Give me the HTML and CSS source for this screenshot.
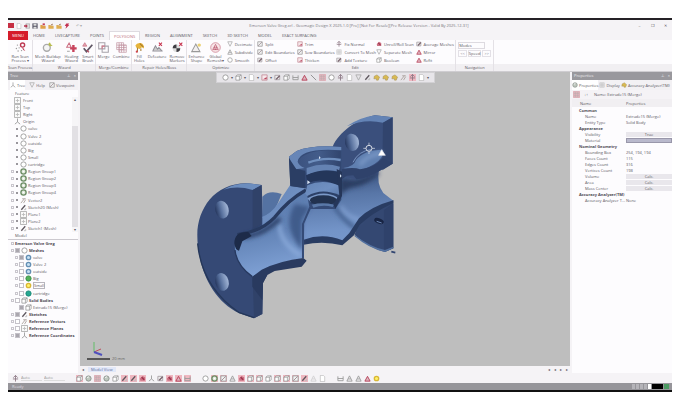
FILE: index.html
```html
<!DOCTYPE html>
<html lang="en">

<head>
    <meta charset="UTF-8">
    <meta name="viewport" content="width=device-width, initial-scale=1.0">
    <title>Geomagic Design X</title>
    <link rel="stylesheet" href="styles.css">
</head>

<body>
    <!-- shared icons -->
    <svg class="defs" aria-hidden="true">
        <symbol id="page" viewBox="0 0 16 16"><path d="M3 1h7l3 3v11H3z" fill="#fff" stroke="#999" /></symbol>
        <symbol id="save" viewBox="0 0 16 16"><path d="M1 1h14v14H1z" fill="#555364" /><path d="M4 2h8v5H4zM4 10h8v5H4z" fill="#ddd" /></symbol>
        <symbol id="folder" viewBox="0 0 16 16"><path d="M1 5h5l2 2h7v8H1z" fill="#dfad51" /><path d="M7 6l5-5v5z" fill="#8a5530" /></symbol>
        <symbol id="folderred" viewBox="0 0 16 16"><path d="M1 5h5l2 2h7v8H1z" fill="#dfa149" /><path d="M7 1h6v5H7z" fill="#c33d58" /></symbol>
        <symbol id="import" viewBox="0 0 16 16"><path d="M5 2h10v12H5z" fill="#ddd" stroke="#777" /><path d="M0 6h5V3l5 5-5 5v-3H0z" fill="#b5304c" /></symbol>
        <symbol id="flash" viewBox="0 0 16 16"><path d="M6 1h8l-3 4h3L4 15l2-7H2z" fill="#c33150" /></symbol>
        <symbol id="scan" viewBox="0 0 32 32"><circle cx="22" cy="9" r="6" fill="none" stroke="#bd3952" stroke-width="4" /><path d="M20 15l4 3 6 8-6-3z" fill="#bd3952" /><g fill="#999"><circle cx="7" cy="9" r="2" /><circle cx="4" cy="19" r="2" /><circle cx="12" cy="17" r="2" /><circle cx="9" cy="26" r="2" /><circle cx="19" cy="25" r="2" /></g></symbol>
        <symbol id="mesh" viewBox="0 0 32 32"><circle cx="14" cy="17" r="10" fill="#f5f5f5" stroke="#aaa" stroke-width="4" /><path d="M18 6l5-5 3 6 5 3-8 3z" fill="#b8bd4c" /></symbol>
        <symbol id="heal" viewBox="0 0 32 32"><path d="M2 15L9 3l6 12z" fill="#fff" stroke="#cc6e82" stroke-width="3" /><path d="M18 9h7v6h6v7h-6v7h-7v-7h-6v-7h6z" fill="#c8435c" /><path d="M3 27h8" stroke="#aaa" stroke-width="3" /></symbol>
        <symbol id="brush" viewBox="0 0 32 32"><path d="M2 12L8 2l6 10z" fill="#e6a5b1" stroke="#c4677a" stroke-width="2" /><path d="M5 18l8 10L30 8" fill="none" stroke="#5f5664" stroke-width="5" /><path d="M14 24l6 6" stroke="#b34b61" stroke-width="4" /></symbol>
        <symbol id="merge" viewBox="0 0 32 32"><path d="M2 2h18v18H2zM12 12h18v18H12z" fill="none" stroke="#a7a3ab" stroke-width="3" /><path d="M12 20v-8h8" fill="none" stroke="#d37a8b" stroke-width="3" /></symbol>
        <symbol id="combine" viewBox="0 0 32 32"><path d="M2 2h20v20H2zM9 2v28M16 2v28M2 9h28M2 16h28M9 9h21v21H9zM23 9v21M9 23h21" fill="none" stroke="#c295a2" stroke-width="2" /></symbol>
        <symbol id="fill" viewBox="0 0 32 32"><path d="M4 10Q8 1 20 3q10 3 9 16l-6-4-7 5-9-3z" fill="#e6b43c" /><path d="M17 5l10 9M10 17v13M20 19v7" stroke="#a57a2d" stroke-width="3" /><circle cx="8" cy="28" r="3" fill="#d24055" /></symbol>
        <symbol id="defeature" viewBox="0 0 32 32"><path d="M1 26h30M3 25l7-14 6 10 4-5 8 9" fill="#ccc" stroke="#929097" stroke-width="3" /><path d="M20 2l9 9m0-9l-9 9" stroke="#c5304b" stroke-width="3" /></symbol>
        <symbol id="marker" viewBox="0 0 32 32"><circle cx="13" cy="18" r="11" fill="#ddd" /><path d="M13 18V7A11 11 0 0 0 2 18zM13 18v11a11 11 0 0 0 11-11z" fill="#3e3c42" /><path d="M21 2l9 9m0-9l-9 9" stroke="#c5304b" stroke-width="3" /></symbol>
        <symbol id="enhance" viewBox="0 0 32 32"><path d="M2 28L14 6l12 22z" fill="#f3f0f0" stroke="#999" stroke-width="3" /><circle cx="24" cy="9" r="5" fill="#ecd276" /></symbol>
        <symbol id="remesh" viewBox="0 0 32 32"><circle cx="16" cy="16" r="14" fill="#f8e6e9" stroke="#c97889" stroke-width="2" /><path d="M8 22L16 7l8 15zM12 15h8l-4 7z" fill="none" stroke="#b64d64" stroke-width="2" /></symbol>
        <symbol id="tri" viewBox="0 0 16 16"><path d="M2 14L8 2l6 12zM5 9h6" fill="none" stroke="#999" stroke-width="2" /></symbol>
        <symbol id="tridown" viewBox="0 0 16 16"><path d="M2 2h12L8 14z" fill="none" stroke="#aaa" stroke-width="2" /></symbol>
        <symbol id="redtri" viewBox="0 0 16 16"><path d="M2 14L8 3l6 11z" fill="#ddb4be" stroke="#b53b54" stroke-width="2" /></symbol>
        <symbol id="split" viewBox="0 0 16 16"><path d="M2 2h12v12H2z" fill="#f2f2f2" stroke="#999" stroke-width="2" /><path d="M3 13L13 3" stroke="#998890" stroke-width="2" /></symbol>
        <symbol id="trim" viewBox="0 0 16 16"><path d="M2 2h12v12H2z" fill="#f7e8eb" stroke="#c6909c" stroke-width="2" /><path d="M5 12h8V7z" fill="#ba4860" /></symbol>
        <symbol id="grid" viewBox="0 0 16 16"><path d="M2 2h12v12H2zM2 6h12M2 10h12M6 2v12M10 2v12" fill="none" stroke="#aaa" stroke-width="1" /></symbol>
        <symbol id="tool" viewBox="0 0 16 16"><path d="M2 3h11v10H2z" fill="#eee" stroke="#a79fa5" stroke-width="2" /><path d="M5 12L13 4" stroke="#77606a" stroke-width="3" /></symbol>
        <symbol id="redtool" viewBox="0 0 16 16"><path d="M2 8l6-6 6 3v8H3z" fill="#cb7284" /><path d="M6 5l6 6" stroke="#9d2f49" stroke-width="3" /></symbol>
        <symbol id="normal" viewBox="0 0 16 16"><path d="M8 1v14M3 6l5-5 5 5M2 9h12" fill="none" stroke="#8c7783" stroke-width="2" /></symbol>
        <symbol id="plane" viewBox="0 0 16 16"><path d="M1 1h14v14H1z" fill="#fafafa" stroke="#aaa" stroke-width="2" /><path d="M8 4v8M4 8h8" stroke="#bbb" stroke-width="2" /></symbol>
        <symbol id="origin" viewBox="0 0 16 16"><path d="M8 1v8l-6 5m6-5l6 5" fill="none" stroke="#999" stroke-width="2" /></symbol>
        <symbol id="ring" viewBox="0 0 16 16"><circle cx="8" cy="8" r="6" fill="#fff" stroke="#999" stroke-width="2" /></symbol>
        <symbol id="region" viewBox="0 0 16 16"><circle cx="8" cy="8" r="6" fill="#d8e3d3" stroke="#6d8d65" stroke-width="3" /><path d="M6 6h4v4H6z" fill="#fff" /></symbol>
        <symbol id="vector" viewBox="0 0 16 16"><path d="M2 14L10 4M5 4h8M8 14l5-8" stroke="#aaa09a" stroke-width="2" /></symbol>
        <symbol id="pencil" viewBox="0 0 16 16"><path d="M3 13L12 3" stroke="#5d565d" stroke-width="3" /><path d="M9 13h4V9" fill="none" stroke="#bbb" stroke-width="2" /></symbol>
        <symbol id="cube" viewBox="0 0 16 16"><path d="M2 5l4-3h8v9l-4 3H2zM2 5h8v9M10 5l4-3" fill="#fff" stroke="#888" stroke-width="1.5" /></symbol>
        <symbol id="blue" viewBox="0 0 16 16"><circle cx="8" cy="8" r="5" fill="#c7e0f2" stroke="#638fb4" stroke-width="3" /></symbol>
        <symbol id="green" viewBox="0 0 16 16"><circle cx="8" cy="8" r="6" fill="#55b35d" stroke="#338a45" stroke-width="2" /></symbol>
        <symbol id="yellow" viewBox="0 0 16 16"><circle cx="8" cy="8" r="5" fill="#fff16a" stroke="#d9b735" stroke-width="3" /></symbol>
        <symbol id="teal" viewBox="0 0 16 16"><circle cx="8" cy="8" r="6" fill="#28a791" stroke="#178775" stroke-width="2" /></symbol>
        <symbol id="ball" viewBox="0 0 16 16"><circle cx="8" cy="8" r="6" fill="#bfc8bf" stroke="#89918a" stroke-width="2" /><path d="M5 6l4-2" stroke="#fff" stroke-width="2" /></symbol>
        <symbol id="gold" viewBox="0 0 16 16"><path d="M3 5l6-3 6 5-3 7H8v-3H2z" fill="#d9ba52" stroke="#9b8550" /></symbol>
        <symbol id="line" viewBox="0 0 16 16"><path d="M2 2l12 12" stroke="#888" stroke-width="2" /></symbol>
        <symbol id="measure" viewBox="0 0 16 16"><path d="M2 3v10h12V3M2 8h12" fill="none" stroke="#999" stroke-width="2" /></symbol>
    </svg>

    <div class="app">
        <header class="titlebar">
            <div class="quick">
                <span class="logo"></span>
                <svg><use href="#page" /></svg>
                <svg><use href="#import" /></svg>
                <svg><use href="#save" /></svg>
                <svg><use href="#folderred" /></svg>
                <svg><use href="#folder" /></svg>
                <svg><use href="#folder" /></svg>
                <svg><use href="#flash" /></svg>
                <span class="faint">↶ ▾</span>
            </div>
            <h1>Emerson Valve Greg.xrl - Geomagic Design X 2025.1.0 [Pro] [Not For Resale][Pre Release Version - Valid By 2025-12-31]</h1>
            <div class="window-buttons">
                <button aria-label="Minimize">–</button>
                <button aria-label="Restore">❐</button>
                <button aria-label="Close">✕</button>
            </div>
        </header>

        <nav class="tabs">
            <button class="menu">MENU</button>
            <button>HOME</button>
            <button>LIVECAPTURE</button>
            <button>POINTS</button>
            <button class="active">POLYGONS</button>
            <button>REGION</button>
            <button>ALIGNMENT</button>
            <button>SKETCH</button>
            <button>3D SKETCH</button>
            <button>MODEL</button>
            <button>EXACT SURFACING</button>
        </nav>

        <div class="ribbon">
            <section class="group scan">
                <div class="tools">
                    <button class="big"><svg><use href="#scan" /></svg><span>Run Scan<br>Process ▾</span></button>
                </div>
                <h2>Scan Process</h2>
            </section>
            <section class="group wizard">
                <div class="tools">
                    <button class="big"><svg><use href="#mesh" /></svg><span>Mesh Buildup<br>Wizard</span></button>
                    <button class="big"><svg><use href="#heal" /></svg><span>Healing<br>Wizard</span></button>
                    <button class="big"><svg><use href="#brush" /></svg><span>Smart<br>Brush</span></button>
                </div>
                <h2>Wizard</h2>
            </section>
            <section class="group combine">
                <div class="tools">
                    <button class="big"><svg><use href="#merge" /></svg><span>Merge</span></button>
                    <button class="big"><svg><use href="#combine" /></svg><span>Combine</span></button>
                </div>
                <h2>Merge/Combine</h2>
            </section>
            <section class="group repair">
                <div class="tools">
                    <button class="big"><svg><use href="#fill" /></svg><span>Fill<br>Holes</span></button>
                    <button class="big"><svg><use href="#defeature" /></svg><span>Defeature</span></button>
                    <button class="big"><svg><use href="#marker" /></svg><span>Remove<br>Markers</span></button>
                </div>
                <h2>Repair Holes/Boss</h2>
            </section>
            <section class="group optimize">
                <div class="tools">
                    <button class="big"><svg><use href="#enhance" /></svg><span>Enhance<br>Shape</span></button>
                    <button class="big"><svg><use href="#remesh" /></svg><span>Global<br>Remesh▾</span></button>
                    <div class="stack">
                        <button><svg><use href="#tridown" /></svg>Decimate</button>
                        <button><svg><use href="#tri" /></svg>Subdivide</button>
                        <button><svg><use href="#ring" /></svg>Smooth</button>
                    </div>
                </div>
                <h2>Optimize</h2>
            </section>
            <section class="group edit">
                <div class="tools">
                    <div class="stack">
                        <button><svg><use href="#split" /></svg>Split</button>
                        <button><svg><use href="#split" /></svg>Edit Boundaries</button>
                        <button><svg><use href="#tool" /></svg>Offset</button>
                    </div>
                    <div class="stack">
                        <button><svg><use href="#trim" /></svg>Trim</button>
                        <button><svg><use href="#split" /></svg>Sew Boundaries</button>
                        <button><svg><use href="#trim" /></svg>Thicken</button>
                    </div>
                    <div class="stack">
                        <button><svg><use href="#normal" /></svg>Fix Normal</button>
                        <button><svg><use href="#grid" /></svg>Convert To Mesh</button>
                        <button><svg><use href="#tool" /></svg>Add Texture</button>
                    </div>
                    <div class="stack">
                        <button><svg><use href="#redtool" /></svg>Unroll/Roll Scan</button>
                        <button><svg><use href="#tridown" /></svg>Separate Mesh</button>
                        <button><svg><use href="#cube" /></svg>Boolean</button>
                    </div>
                    <div class="stack">
                        <button><svg><use href="#tool" /></svg>Average Meshes</button>
                        <button><svg><use href="#redtri" /></svg>Mirror</button>
                        <button><svg><use href="#redtri" /></svg>Refit</button>
                    </div>
                </div>
                <h2>Edit</h2>
            </section>
            <section class="group navigation">
                <div class="tools nav-tools">
                    <select aria-label="Navigation mode"><option>Modes</option></select>
                    <div class="steps"><button>&lt;&lt;</button><button>Speed</button><button>&gt;&gt;</button></div>
                </div>
                <h2>Navigation</h2>
            </section>
            <div class="rest"></div>
        </div>

        <main class="workspace">
            <aside class="tree">
                <header class="panel-head"><span>Tree</span><span class="pins">⊥ ×</span></header>
                <div class="panel-tabs">
                    <button class="on"><svg><use href="#origin" /></svg>Tree</button>
                    <button><svg><use href="#tridown" /></svg>Help</button>
                    <button><svg><use href="#split" /></svg>Viewpoint</button>
                </div>
                <h3>Feature</h3>
                <div class="scroll">
                    <ul class="list features">
                        <li class="root"><svg><use href="#plane" /></svg>Front</li>
                        <li class="root"><svg><use href="#plane" /></svg>Top</li>
                        <li class="root"><svg><use href="#plane" /></svg>Right</li>
                        <li class="root"><svg><use href="#origin" /></svg>Origin</li>
                        <li><i></i><b></b><svg><use href="#ring" /></svg>valve</li>
                        <li><i></i><b></b><svg><use href="#ring" /></svg>Valve 2</li>
                        <li><i></i><b></b><svg><use href="#ring" /></svg>outside</li>
                        <li><i></i><b></b><svg><use href="#ring" /></svg>Big</li>
                        <li><i></i><b></b><svg><use href="#ring" /></svg>Small</li>
                        <li><i></i><b></b><svg><use href="#ring" /></svg>cartridge</li>
                        <li><i class="plus"></i><b></b><svg><use href="#region" /></svg>Region Group1</li>
                        <li><i class="plus"></i><b></b><svg><use href="#region" /></svg>Region Group2</li>
                        <li><i class="plus"></i><b></b><svg><use href="#region" /></svg>Region Group3</li>
                        <li><i class="plus"></i><b></b><svg><use href="#region" /></svg>Region Group4</li>
                        <li><i class="plus"></i><b></b><svg><use href="#vector" /></svg>Vector2</li>
                        <li><i class="plus"></i><b></b><svg><use href="#pencil" /></svg>Sketch20 (Mesh)</li>
                        <li><i class="plus"></i><b></b><svg><use href="#plane" /></svg>Plane1</li>
                        <li><i class="plus"></i><b></b><svg><use href="#plane" /></svg>Plane2</li>
                        <li><i class="plus"></i><b></b><svg><use href="#pencil" /></svg>Sketch1 (Mesh)</li>
                    </ul>
                    <div class="scrollbar"><span>▴</span><div class="thumb"></div><span>▾</span></div>
                </div>
                <h3 class="model-title">Model</h3>
                <ul class="list models">
                    <li class="strong"><i class="plus"></i>Emerson Valve Greg</li>
                    <li class="strong"><i class="plus"></i><input type="checkbox" aria-label="Meshes" checked><svg><use href="#ring" /></svg>Meshes</li>
                    <li class="child"><i class="plus"></i><input type="checkbox" aria-label="valve" checked><svg><use href="#blue" /></svg>valve</li>
                    <li class="child"><i class="plus"></i><input type="checkbox" aria-label="Valve 2"><svg><use href="#blue" /></svg>Valve 2</li>
                    <li class="child"><i class="plus"></i><input type="checkbox" aria-label="outside"><svg><use href="#blue" /></svg>outside</li>
                    <li class="child"><i class="plus"></i><input type="checkbox" aria-label="Big"><svg><use href="#green" /></svg>Big</li>
                    <li class="child"><i class="plus"></i><input type="checkbox" aria-label="Small"><svg><use href="#yellow" /></svg><span class="selected">Small</span></li>
                    <li class="child"><i class="plus"></i><input type="checkbox" aria-label="cartridge"><svg><use href="#teal" /></svg>cartridge</li>
                    <li class="strong"><i class="plus"></i><input type="checkbox" aria-label="Solid Bodies"><svg><use href="#cube" /></svg>Solid Bodies</li>
                    <li class="child"><i></i><input type="checkbox" aria-label="Extrude15" checked><svg><use href="#cube" /></svg>Extrude15 (Merge)</li>
                    <li class="strong"><i class="plus"></i><input type="checkbox" aria-label="Sketches" checked><svg><use href="#pencil" /></svg>Sketches</li>
                    <li class="strong"><i class="plus"></i><input type="checkbox" aria-label="Reference Vectors"><svg><use href="#vector" /></svg>Reference Vectors</li>
                    <li class="strong"><i class="plus"></i><input type="checkbox" aria-label="Reference Planes"><svg><use href="#plane" /></svg>Reference Planes</li>
                    <li class="strong"><i class="plus"></i><input type="checkbox" aria-label="Reference Coordinates" checked><svg><use href="#origin" /></svg>Reference Coordinates</li>
                </ul>
            </aside>

            <section class="center">
                <div class="viewport">
                    <div class="view-tools">
                        <svg><use href="#ring" /></svg><span>▾</span>
                        <svg><use href="#cube" /></svg><span>▾</span>
                        <svg><use href="#page" /></svg><span>▾</span>
                        <svg><use href="#trim" /></svg><span>▾</span>
                        <svg><use href="#tool" /></svg>
                        <svg><use href="#cube" /></svg>
                        <svg><use href="#measure" /></svg>
                        <svg><use href="#redtri" /></svg>
                        <svg><use href="#line" /></svg>
                        <svg class="hot"><use href="#grid" /></svg>
                        <svg><use href="#ring" /></svg>
                        <svg><use href="#normal" /></svg>
                        <svg><use href="#page" /></svg>
                        <svg><use href="#tridown" /></svg>
                        <svg><use href="#pencil" /></svg>
                        <svg><use href="#gold" /></svg>
                        <svg><use href="#gold" /></svg>
                        <svg><use href="#gold" /></svg>
                        <svg><use href="#vector" /></svg>
                        <svg class="hot"><use href="#normal" /></svg>
                        <svg><use href="#page" /></svg><span>▾</span>
                    </div>
                    <svg class="scene" viewBox="0 0 490 283" preserveAspectRatio="xMinYMin meet" role="img" aria-label="Valve body, section view">
                        <defs>
                            <linearGradient id="pipe" x1=".3" y1="0" x2=".5" y2="1"><stop offset="0" stop-color="#5b7bad" /><stop offset=".5" stop-color="#6384b7" /><stop offset="1" stop-color="#82a4d8" /></linearGradient>
                            <linearGradient id="pipe2" x1=".4" y1="0" x2=".5" y2="1"><stop offset="0" stop-color="#384e7a" /><stop offset=".35" stop-color="#5876a7" /><stop offset=".8" stop-color="#7394c8" /><stop offset="1" stop-color="#7697cb" /></linearGradient>
                            <linearGradient id="slope" x1="0" y1="0" x2="1" y2="1"><stop offset="0" stop-color="#6585b6" /><stop offset=".5" stop-color="#6f8fc1" /><stop offset="1" stop-color="#5573a3" /></linearGradient>
                            <linearGradient id="bowl" x1="0" y1="0" x2="1" y2="0"><stop offset="0" stop-color="#3b527f" /><stop offset=".5" stop-color="#435c8a" /><stop offset="1" stop-color="#31456e" /></linearGradient>
                            <linearGradient id="hole"><stop offset="0" stop-color="#26375e" /><stop offset=".4" stop-color="#566f9c" /><stop offset="1" stop-color="#a5b8d8" /></linearGradient>
                            <filter id="shade" x="-50%" y="-50%" width="200%" height="200%"><feGaussianBlur stdDeviation="7" /></filter>
                        </defs>
                        <g transform="translate(100 17) scale(.3333)">
                            <!-- lower rear flange -->
                            <path d="M640 301V445L615 456Q570 445 524 405L536 360Q580 322 640 301z" fill="#344872" />
                            <path d="M612 330l28-20v135l-28 11z" fill="#2f426b" />
                            <path d="M524 405Q570 441 615 450L640 440v5l-25 11Q567 446 524 409z" fill="#52709f" />
                            <!-- right passage -->
                            <path d="M380 245L524 225 597 208Q589 253 610 279L640 302Q570 328 540 368L487 434Q435 408 371 432L366 330z" fill="url(#pipe2)" />
                            <path d="M480 236L524 240Q560 232 596 212L596 224Q560 255 520 262 490 270 478 290z" fill="#2b3c62" filter="url(#shade)" />
                            <path d="M462 318Q490 360 525 385" fill="none" stroke="#415d8c" stroke-width="11" filter="url(#shade)" />
                            <path d="M482 318Q500 352 540 360" fill="none" stroke="#8caadb" stroke-width="7" filter="url(#shade)" />
                            <path d="M640 301Q572 320 537 355L508 399 487 421Q430 398 371 419V434Q430 422 487 436L522 406 538 376Q574 340 640 309z" fill="#293c62" />
                            <ellipse cx="597" cy="363" rx="15" ry="8" fill="#182544" transform="rotate(20 597 363)" />
                            <path d="M590 364l15 5" stroke="#6c88b7" stroke-width="3" />
                            <!-- rear flange -->
                            <path d="M458 140C478 95 530 58 585 46L638 52V191L598 213C570 230 545 238 523 236L470 225z" fill="#3a4f7c" />
                            <path d="M500 79Q540 52 585 46L638 52 609 68Q555 55 500 79z" fill="#6383b5" />
                            <path d="M609 68l29-16v139l-31 20z" fill="#31446d" />
                            <path d="M490 204Q522 200 528 180 550 150 609 149L606 170Q590 195 545 209 510 214 490 204z" fill="#5f7fb0" />
                            <path d="M540 195q20-30 66-36" fill="none" stroke="#85a2cf" stroke-width="8" filter="url(#shade)" />
                            <path d="M519 187Q535 153 575 148" fill="none" stroke="#7893bf" stroke-width="3" />
                            <path d="M485 208Q520 200 540 208 580 205 608 175L638 190 598 213Q565 235 529 238L520 226 500 227 486 238z" fill="#2f426b" />
                            <ellipse cx="516" cy="127" rx="21" ry="26" fill="url(#hole)" transform="rotate(-12 516 127)" />
                            <!-- front flange -->
                            <path d="M245 255L204 250C105 247 51 327 52 407 53 505 97 602 178 640L222 655 247 642 249 548 262 525 217 520 185 490 175 430 218 400 250 375z" fill="#354975" />
                            <path d="M130 269Q165 250 204 250L245 255 218 270Q172 256 130 269z" fill="#6c8dbe" />
                            <path d="M218 270l27-15V372L218 396zM218 530l31-17-2 129-25 13z" fill="#304269" />
                            <path d="M53 430Q65 560 176 637L222 653" fill="none" stroke="#253759" stroke-width="4" />
                            <!-- side boss and sloped wall -->
                            <path d="M247 290Q268 268 305 282L285 330 247 355z" fill="#5472a2" />
                            <path d="M247 350Q275 340 295 308L330 256 378 260V280L305 345 247 385z" fill="url(#slope)" />
                            <!-- front passage -->
                            <path d="M180 402Q240 395 285 352L376 272 398 308Q368 350 370 475 290 485 217 530 169 495 165 450 162 415 180 402z" fill="url(#pipe)" />
                            <path d="M345 312Q302 380 366 450V360L390 320z" fill="#405b8b" filter="url(#shade)" />
                            <path d="M298 372Q300 430 362 466" fill="none" stroke="#91b0e0" stroke-width="9" filter="url(#shade)" />
                            <path d="M190 410Q250 405 300 355" fill="none" stroke="#2b3e65" stroke-width="14" filter="url(#shade)" />
                            <path d="M172 404Q240 397 284 352 325 300 378 270" fill="none" stroke="#283a5f" stroke-width="10" />
                            <path d="M205 396Q163 394 163 430 166 452 177 452L187 424 215 408z" fill="#1d2b49" />
                            <path d="M165 450Q169 495 217 530" fill="none" stroke="#27395f" stroke-width="4" />
                            <path d="M217 530L245 509Q300 482 370 474L380 482 365 500 284 513 262 525 249 550 247 600 217 560z" fill="#293a5f" />
                            <!-- bonnet ring -->
                            <path d="M327 170L350 153Q399 134 484 141V300L466 327H392L372 372V475H366V372L388 320 378 265 331 258z" fill="#354b77" />
                            <path d="M350 200Q352 145 482 151V212Q430 190 378 218z" fill="url(#bowl)" />
                            <path d="M327 170L350 153Q399 134 484 141V151Q360 142 353 185 356 196 374 204L348 208Q330 190 327 170z" fill="#6786b7" />
                            <path d="M385 188Q430 170 482 180" fill="none" stroke="#6f8fbe" stroke-width="7" />
                            <path d="M380 204Q430 186 480 200L476 215Q430 205 380 226z" fill="#6482b2" />
                            <path d="M378 226Q425 203 480 217V262Q430 228 382 250z" fill="#24365a" />
                            <!-- valve seat -->
                            <path d="M382 256Q430 235 480 258L479 296 390 300 376 280z" fill="url(#slope)" />
                            <path d="M382 288Q425 262 478 285L470 307 392 312z" fill="#2c4067" />
                            <path d="M382 295Q430 268 472 292L465 307Q430 295 392 307z" fill="#7b99c8" />
                            <ellipse cx="430" cy="301" rx="40" ry="15" fill="#22324f" />
                            <path d="M396 314q32-8 66 0l-4 7q-29-8-58 2z" fill="#5a79a8" />
                            <path d="M327 174L349 208 376 212V265L331 258z" fill="#2b3e64" />
                            <path d="M470 207L486 215V288L466 327 460 312 478 285z" fill="#253659" />
                            <path d="M382 241l9 6-9 6zM417 168l5 5-5 5zM480 222l5 6-5 5z" fill="#d6e2f3" />
                            <!-- bolt holes -->
                            <ellipse cx="126" cy="329" rx="20" ry="27" fill="url(#hole)" transform="rotate(-15 126 329)" />
                            <ellipse cx="126" cy="546" rx="20" ry="27" fill="url(#hole)" transform="rotate(-15 126 546)" />
                            <!-- cursor -->
                            <circle cx="567" cy="145" r="9" fill="none" stroke="#d5dae3" stroke-width="3" />
                            <path d="M567 128v8m0 18v8m-17-17h8m18 0h9M596 166l9-17 11 17z" fill="#fff" stroke="#e6e9ef" stroke-width="2" />
                            <path d="M634 455l12 3" stroke="#314570" stroke-width="5" />
                        </g>
                        <!-- axes and scale -->
                        <g fill="none" stroke-width="1">
                            <path d="M14 269v-10" stroke="#62bd69" /><path d="M14 269l7-3" stroke="#bc4d5d" /><path d="M14 269l8 3" stroke="#4e50bd" stroke-width="2" />
                            <path d="M7 276h23" stroke="#555" stroke-width="2" />
                        </g>
                        <text x="32" y="277">20 mm</text>
                    </svg>
                </div>
                <div class="view-tabs"><span>◂</span><button>Model View</button><span class="arrows">◂ ◂ ▸ ▸</span></div>
            </section>

            <aside class="properties">
                <header class="panel-head"><span>Properties</span><span class="pins">⊥ ×</span></header>
                <div class="panel-tabs">
                    <button class="on"><svg><use href="#ball" /></svg>Properties</button>
                    <button><svg><use href="#grid" /></svg>Display</button>
                    <button><svg><use href="#gold" /></svg>Accuracy Analyzer(TM)</button>
                </div>
                <div class="name-row"><svg class="hot"><use href="#grid" /></svg><span class="sort">↓↑</span><span>Name: Extrude15 (Merge)</span></div>
                <table>
                    <thead><tr><th>Name</th><th>Properties</th></tr></thead>
                    <tbody>
                        <tr class="section"><th colspan="2">Common</th></tr>
                        <tr><td>Name</td><td>Extrude15 (Merge)</td></tr>
                        <tr><td>Entity Type</td><td>Solid Body</td></tr>
                        <tr class="section"><th colspan="2">Appearance</th></tr>
                        <tr><td>Visibility</td><td><button>True</button></td></tr>
                        <tr><td>Material</td><td><button class="material" aria-label="Material color"></button></td></tr>
                        <tr class="section"><th colspan="2">Nominal Geometry</th></tr>
                        <tr><td>Bounding Box</td><td>254, 194, 194</td></tr>
                        <tr><td>Faces Count</td><td>115</td></tr>
                        <tr><td>Edges Count</td><td>316</td></tr>
                        <tr><td>Vertices Count</td><td>198</td></tr>
                        <tr><td>Volume</td><td><button>Calc.</button></td></tr>
                        <tr><td>Area</td><td><button>Calc.</button></td></tr>
                        <tr><td>Mass Center</td><td><button>Calc.</button></td></tr>
                        <tr class="section"><th colspan="2">Accuracy Analyzer(TM)</th></tr>
                        <tr><td>Accuracy Analyzer T...</td><td>None</td></tr>
                    </tbody>
                </table>
            </aside>
        </main>

        <footer>
            <div class="bottom-tools">
                <div class="filters">
                    <svg><use href="#normal" /></svg>
                    <select aria-label="Filter"><option>Auto</option></select>
                    <select aria-label="Snap"><option>Auto</option></select>
                </div>
                <div class="icons">
                    <svg class="hot"><use href="#cube" /></svg>
                    <svg><use href="#ball" /></svg>
                    <svg class="hot"><use href="#grid" /></svg>
                    <svg><use href="#ball" /></svg>
                    <svg><use href="#cube" /></svg>
                    <svg class="hot"><use href="#pencil" /></svg>
                    <svg class="hot"><use href="#pencil" /></svg>
                    <svg class="hot"><use href="#redtool" /></svg>
                    <svg><use href="#origin" /></svg>
                    <svg><use href="#tool" /></svg>
                    <svg class="hot"><use href="#redtool" /></svg>
                    <svg class="hot"><use href="#redtri" /></svg>
                    <svg class="hot"><use href="#measure" /></svg>
                </div>
                <div class="icons">
                    <svg><use href="#ring" /></svg>
                    <svg class="hot"><use href="#region" /></svg>
                    <svg class="hot"><use href="#split" /></svg>
                    <svg><use href="#tri" /></svg>
                    <svg class="hot"><use href="#redtool" /></svg>
                    <svg class="hot"><use href="#cube" /></svg>
                    <svg class="hot"><use href="#cube" /></svg>
                    <svg><use href="#cube" /></svg>
                    <svg class="hot"><use href="#cube" /></svg>
                    <svg class="hot"><use href="#cube" /></svg>
                    <svg class="hot"><use href="#split" /></svg>
                    <svg class="hot"><use href="#pencil" /></svg>
                    <svg class="dim"><use href="#tri" /></svg>
                    <svg><use href="#page" /></svg>
                </div>
                <div class="icons">
                    <svg><use href="#measure" /></svg>
                    <svg><use href="#tri" /></svg>
                    <svg><use href="#tri" /></svg>
                    <svg><use href="#redtri" /></svg>
                    <svg><use href="#yellow" /></svg>
                </div>
            </div>
            <div class="status"><span>Ready</span><div class="meters"><i></i><i></i><i></i><i></i><i class="white"></i><i class="black"></i><i class="ok"></i></div></div>
        </footer>
    </div>
</body>

</html>
```
FILE: styles.css
```css
* {
    box-sizing: border-box;
}

body {
    display: flex;
    min-height: 100vh;
    margin: 0;
    padding: 18px 8px 19px;
    background: #fff;
    color: #5a575e;
    font: 4px/5px "Open Sans", "Noto Sans", sans-serif;
}

button,
select {
    margin: 0;
    padding: 0;
    border: 0;
    background: none;
    color: inherit;
    font: inherit;
    appearance: none;
}

h1,
h2,
h3,
ul {
    margin: 0;
    padding: 0;
    font-size: 4px;
    font-weight: normal;
    list-style: none;
}

svg {
    flex: none;
    width: 7px;
    height: 7px;
}

.defs {
    position: absolute;
    width: 0;
    height: 0;
}

.hot {
    background: #efb7c0;
}

.dim {
    opacity: .4;
}

.app {
    display: flex;
    flex: 1;
    flex-direction: column;
    min-width: 0;
    border-top: 2px solid #252126;
    border-bottom: 2px solid #111;
    background: #f5f3f6;
}

/* title and tabs */
.titlebar {
    display: grid;
    grid-template-columns: 1fr auto 1fr;
    align-items: center;
    height: 11px;
}

.titlebar h1 {
    color: #77747b;
    white-space: nowrap;
    padding-left: 38px;
}

.quick {
    display: flex;
    gap: 2px;
    align-items: center;
}

.quick svg {
    width: 6px;
    height: 6px;
}

.logo {
    width: 6px;
    height: 5px;
    background: #c62f43;
}

.faint {
    padding-left: 4px;
    color: #aaa;
}

.window-buttons {
    display: flex;
    gap: 8px;
    justify-content: flex-end;
    padding-right: 4px;
}

.window-buttons button {
    width: 5px;
}

.tabs {
    display: flex;
    height: 9px;
}

.tabs button {
    padding: 0 5px;
    white-space: nowrap;
}

.tabs .menu {
    width: 20px;
    background: #d51d2b;
    color: #fff;
    padding: 0;
}

.tabs .active {
    padding: 0 4px;
    border: 1px solid #dedbe0;
    border-bottom: 0;
    background: #fff;
    color: #c17380;
}

/* ribbon */
.ribbon {
    display: flex;
    height: 32px;
    background: #fdfcfe;
    border-bottom: 1px solid #cfcdd1;
}

.group {
    display: flex;
    flex-direction: column;
    border-right: 1px solid #e4e1e6;
    white-space: nowrap;
}

.group h2 {
    height: 7px;
    line-height: 7px;
    background: #f1eff2;
    text-align: center;
}

.rest {
    flex: 1;
    align-self: flex-end;
    height: 7px;
    background: #f1eff2;
}

.tools {
    display: flex;
    flex: 1;
    justify-content: space-around;
    align-items: flex-start;
}

.big {
    display: flex;
    flex-direction: column;
    align-items: center;
    text-align: center;
    line-height: 4px;
}

.big svg {
    width: 11px;
    height: 11px;
    margin: 2px 0;
}

.stack {
    display: flex;
    flex-direction: column;
}

.stack button {
    display: flex;
    gap: 2px;
    align-items: center;
    height: 8px;
}

.stack svg {
    width: 6px;
    height: 6px;
}

.scan {
    min-width: 25px;
}

.wizard {
    min-width: 63px;
}

.combine {
    min-width: 36px;
}

.repair {
    min-width: 55px;
}

.optimize {
    min-width: 68px;
}

.edit {
    min-width: 198px;
}

.edit .tools {
    display: grid;
    grid-template-columns: repeat(5, 1fr);
    padding-left: 2px;
}

.navigation {
    min-width: 38px;
}

.nav-tools {
    flex-direction: column;
    justify-content: flex-start;
    padding: 2px 2px 0;
}

.nav-tools select {
    width: 27px;
    height: 7px;
    border: 1px solid #dddae0;
}

.steps {
    display: flex;
    gap: 1px;
    align-self: stretch;
    padding-top: 1px;
}

.steps button {
    flex: 1;
    height: 7px;
    border: 1px solid #e3e0e6;
}

/* work area */
.workspace {
    display: grid;
    grid-template-columns: 70px 1fr 100px;
    flex: 1;
    gap: 2px;
}

.tree,
.properties {
    background: #fdfcfe;
    white-space: nowrap;
    min-width: 0;
}

.panel-head {
    display: flex;
    justify-content: space-between;
    height: 8px;
    padding: 0 2px;
    background: #99989d;
    color: #f1f0f3;
    line-height: 8px;
}

.pins {
    word-spacing: 3px;
}

.panel-tabs {
    display: flex;
    gap: 4px;
    height: 10px;
    padding: 0 2px;
    background: #f3f1f4;
}

.panel-tabs button {
    display: flex;
    gap: 1px;
    align-items: center;
}

.panel-tabs svg {
    width: 6px;
    height: 6px;
}

.panel-tabs .on {
    background: #fff;
}

.properties .panel-tabs {
    gap: 1px;
    padding: 0;
}

.tree h3 {
    padding-left: 7px;
    line-height: 7px;
}

.scroll {
    display: flex;
    height: 135px;
}

.list {
    display: grid;
    flex: 1;
    grid-auto-rows: 1fr;
}

.list li {
    display: flex;
    gap: 1px;
    align-items: center;
    padding-left: 3px;
}

.list .root {
    gap: 2px;
    padding-left: 6px;
}

.list i {
    width: 3px;
    height: 3px;
}

.list .plus {
    border: 1px solid #c9c6cd;
}

.list b {
    width: 2px;
    height: 2px;
    margin: 0 1px;
    border-radius: 50%;
    background: #77747b;
}

.list input {
    width: 5px;
    height: 5px;
    margin: 0;
    border: 1px solid #c5c2c9;
    background: #fff;
    appearance: none;
}

.list input:checked {
    background: #aaa7ae;
}

.models {
    height: 99px;
}

.list .strong {
    color: #4e4a53;
    font-weight: bold;
}

.list .child {
    padding-left: 7px;
}

.selected {
    border: 1px solid #b9b6bd;
}

.tree .model-title {
    border-bottom: 1px solid #ccc9cf;
}

.scrollbar {
    display: flex;
    flex-direction: column;
    width: 6px;
    background: #f6f5f7;
    text-align: center;
}

.thumb {
    flex: 1;
    margin-top: 24px;
    background: #e2e0e4;
}

.center {
    display: flex;
    flex-direction: column;
    min-width: 0;
}

.viewport {
    display: flex;
    flex: 1;
    flex-direction: column;
    align-items: center;
    background: #bebebe;
}

.view-tools {
    display: flex;
    gap: 2px;
    align-items: center;
    height: 11px;
    padding: 0 5px;
    border: 1px solid #d2d1d4;
    background: #e7e5e9;
}

.view-tools span {
    width: 2px;
}

.scene {
    width: 100%;
    height: auto;
}

.scene text {
    fill: #666;
}

.view-tabs {
    display: flex;
    gap: 4px;
    align-items: center;
    height: 7px;
    padding: 0 2px;
}

.view-tabs button {
    padding: 0 3px;
    background: #e2e8f8;
    color: #596b9d;
}

.arrows {
    margin-left: auto;
    word-spacing: 3px;
}

.name-row {
    display: flex;
    gap: 4px;
    align-items: center;
    height: 9px;
    padding: 0 1px;
    background: #f5f3f6;
}

.sort {
    padding-right: 2px;
}

table {
    width: 100%;
    border-spacing: 0;
    table-layout: fixed;
}

td,
th {
    height: 6px;
    padding: 0 0 0 1px;
    font-weight: normal;
    line-height: 5px;
    text-align: left;
}

td:first-child,
th:first-child {
    width: 53px;
    padding-left: 13px;
}

thead th {
    height: 8px;
    background: #f1eff2;
}

thead th:first-child {
    padding-left: 8px;
}

.properties .section th {
    padding-left: 7px;
    color: #4e4a53;
    font-weight: bold;
}

td button {
    display: block;
    width: 100%;
    height: 5px;
    background: #e9e7ec;
    line-height: 5px;
}

td .material {
    border: 1px solid #9997aa;
    background: #b9b9cc;
}

/* bottom bars */
.bottom-tools {
    display: flex;
    gap: 11px;
    align-items: center;
    height: 10px;
}

.filters {
    display: flex;
    gap: 2px;
    align-items: center;
    padding-left: 4px;
}

.filters select {
    width: 21px;
    border-bottom: 1px solid #ddd;
    color: #999;
}

.icons {
    display: flex;
    gap: 2px;
}

.status {
    display: flex;
    align-items: center;
    justify-content: space-between;
    height: 7px;
    padding: 0 3px 0 4px;
    background: #96959a;
    color: #dedce1;
}

.meters {
    display: flex;
    gap: 1px;
}

.meters i {
    width: 3px;
    height: 5px;
    background: #b5b4b9;
}

.meters .white {
    background: #fff;
}

.meters .black {
    width: 11px;
    background: #000;
}

.meters .ok {
    width: 5px;
    background: #4c9b63;
}
```
